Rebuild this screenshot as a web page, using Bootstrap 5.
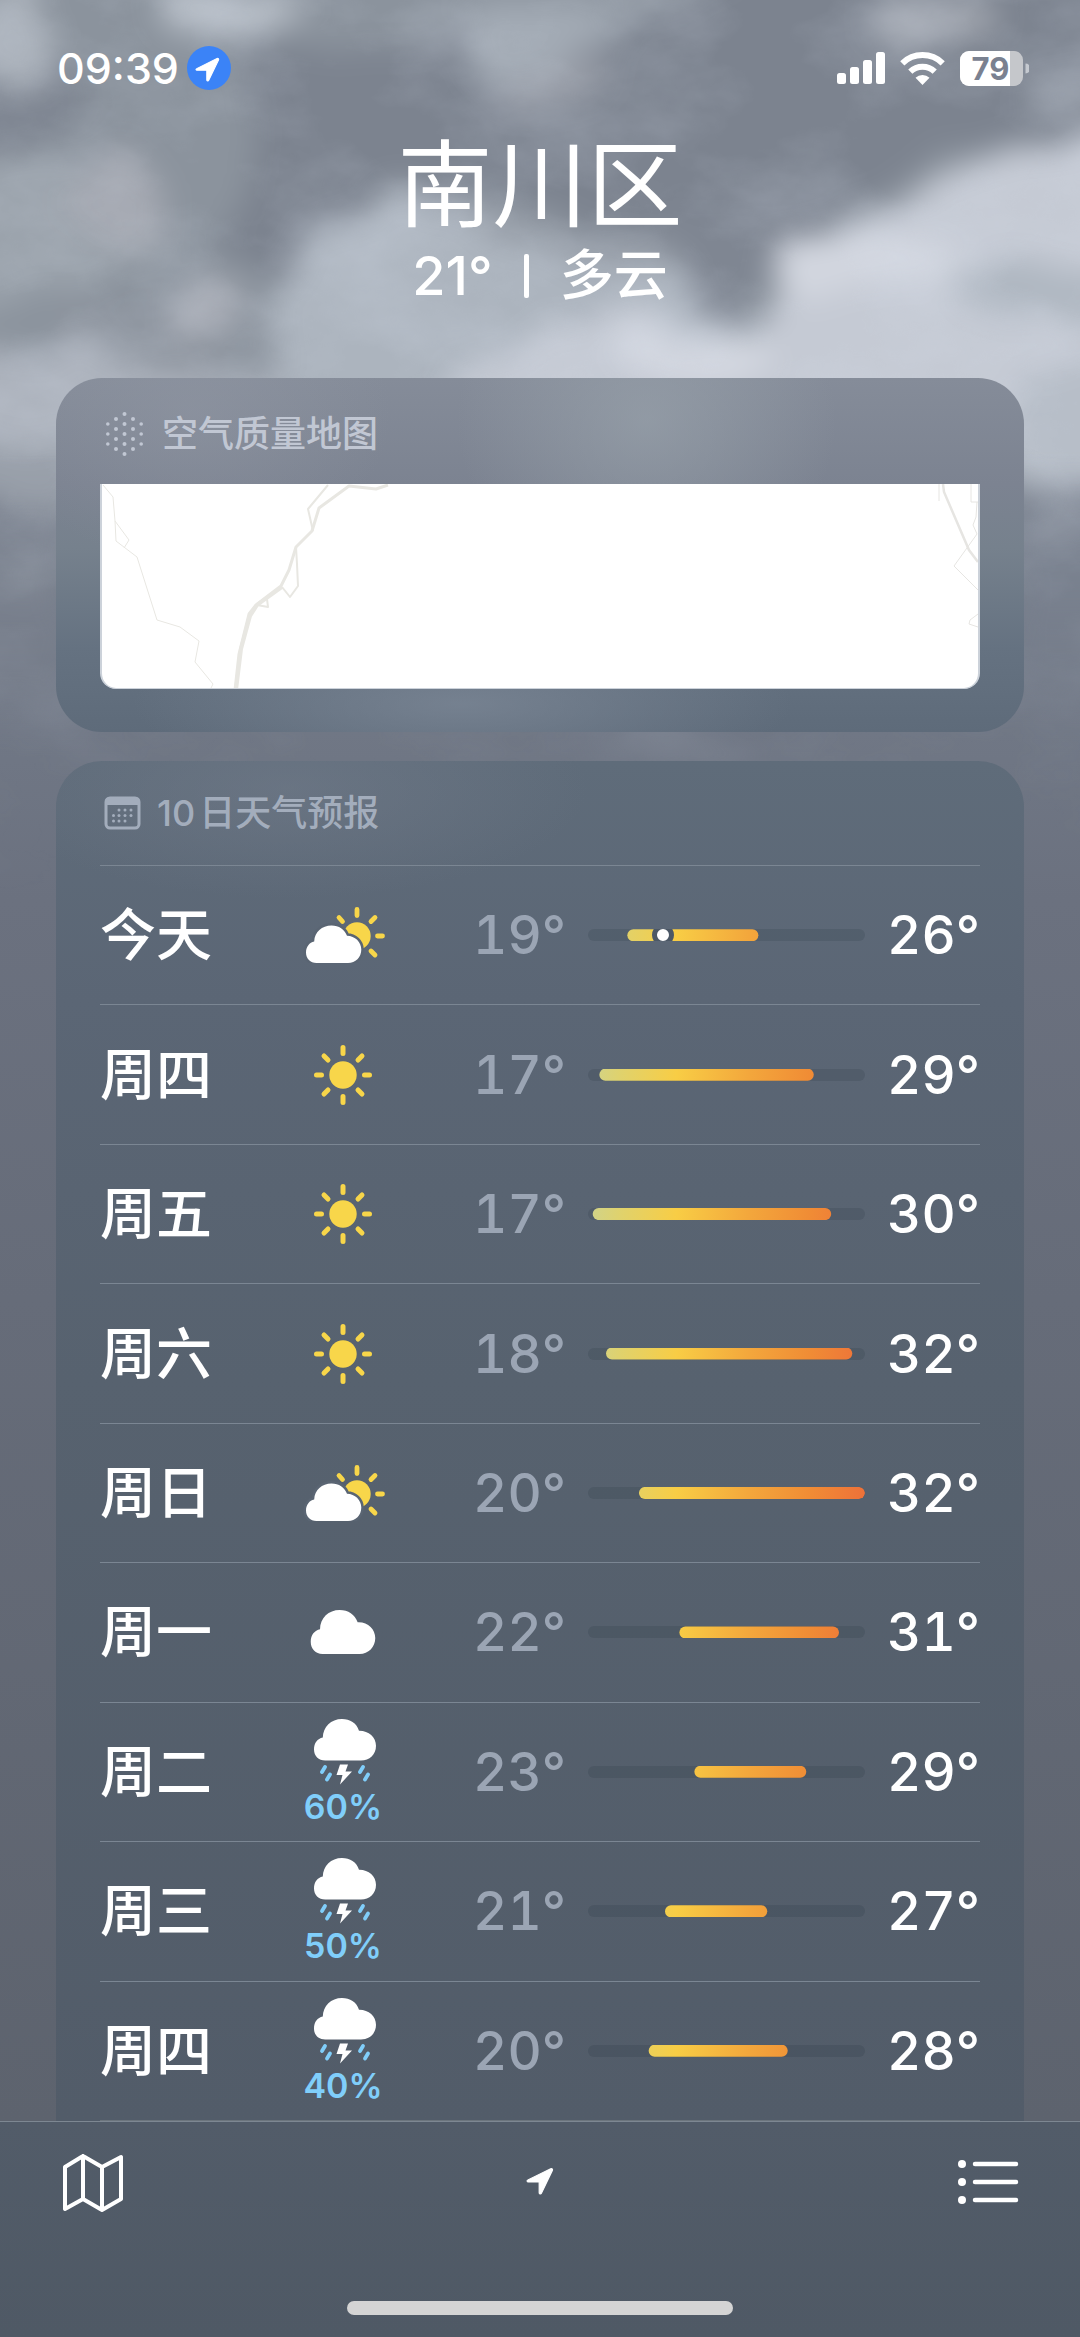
<!DOCTYPE html>
<html lang="zh-CN">
<head>
<meta charset="utf-8">
<meta name="viewport" content="width=device-width, initial-scale=1">
<title>天气 · 南川区</title>
<link href="https://cdn.jsdelivr.net/npm/bootstrap@5.3.0/dist/css/bootstrap.min.css" rel="stylesheet">
<style>
  body { font-family: Inter, "Noto Sans CJK SC", sans-serif; color: #fff; background: #646a77; }
  .weather-app { background: linear-gradient(#8b939e 0, #8b939e 380px, #747b88 620px, #6f7684 760px, #6b717f 900px, #666c79 1300px, #5d636e 2120px); }
  .sky { position: absolute; top: 0; left: 0; width: 100%; height: 900px; }
  .status-bar { padding: 44px 51px 38px 57px; }
  .clock { font-size: 43px; line-height: 48px; font-weight: 500; }
  .status-row { height: 48px; }
  .status-icons { gap: 15px; }
  .city { font-size: 95px; line-height: 112px; font-weight: 400; }
  .summary { font-size: 54px; line-height: 68px; font-weight: 500; gap: 31px; margin-bottom: 68px; }
  .summary-bar { width: 5px; height: 44px; border-radius: 2px; background: #fff; }
  .panels { padding: 0 56px; gap: 29px; }
  .panel { padding: 28px 44px 0; border-radius: 46px; }
  .panel-air { padding: 32px 44px 43px;
    background: radial-gradient(ellipse 190px 170px at 61% 12%, rgba(158,168,176,.55), transparent),
      radial-gradient(ellipse 200px 150px at 14% 10%, rgba(150,156,168,.4), transparent),
      radial-gradient(ellipse 330px 80px at 42% 92%, rgba(126,137,152,.7), transparent),
      linear-gradient(#858c99 0, #7c8391 106px, #76818d 170px, #657281 270px, #5e6b7a 354px); }
  .panel-days { border-radius: 46px 46px 0 0;
    background: radial-gradient(ellipse 300px 110px at 24% 2%, rgba(116,125,140,.5), transparent),
      linear-gradient(#5f6c7a 0, #5b6675 240px, #57626f 620px, #525c69 100%); }
  .panel-title { font-size: 36px; line-height: 48px; font-weight: 500; padding-bottom: 28px; }
  .panel-air .panel-title { color: #c1c7d3; padding-bottom: 26px; }
  .panel-days .panel-title { color: #a3adbc; }
  .air-map { height: 205px; background: #fff; border: 1px solid #ccd2da; border-width: 0 2px 1px; border-radius: 0 0 16px 16px; }
  .forecast-day { flex: 1 1 0; min-height: 130px; border-top: 1px solid #7b8693; font-size: 53px; font-weight: 500; line-height: 62px; }
  .day-name { width: 164px; font-size: 56px; }
  .day-icon { width: 158px; }
  .rain-chance { font-size: 34px; line-height: 36px; font-weight: 600; color: #80cefa; }
  .temp-low { width: 144px; color: #9ba5b4; }
  .temp-high { width: 115px; }
  .temp-low, .temp-high { font-variant-numeric: tabular-nums; }
  .range { height: 12px; margin-left: 22px; border-radius: 6px; background: rgba(20,30,45,.12); position: relative; overflow: hidden; }
  .range-fill { height: 100%; background: linear-gradient(95deg, #cfd38c 0, #e0d26c 12%, #f8cd45 32%, #f3a73c 58%, #f08c35 80%, #ee7139 100%); }
  .range-now { position: absolute; top: -5px; width: 22px; height: 22px; margin-left: -11px; border: 5px solid #4c5866; border-radius: 50%; background: #fff; }
  .toolbar { height: 216px; background: linear-gradient(#525c69, #4f5965); border-top: 1px solid #7d8792; padding: 27px 57px 0; }
  .tool-btn { width: 72px; height: 64px; padding: 0; border: 0; background: none; color: #fff; line-height: 0; }
  .home-line { width: 40%; height: 14px; border-radius: 7px; background: #d4d4d4; margin-bottom: 22px; }
</style>
<script src="https://cdn.jsdelivr.net/npm/bootstrap@5.3.0/dist/js/bootstrap.bundle.min.js"></script>
</head>
<body>
<svg width="0" height="0" class="position-absolute" aria-hidden="true">
  <defs>
    <symbol id="arrow" viewBox="0 0 24 24"><path d="M1.600 11.200 21.200 1.500c1-.5 1.900.4 1.400 1.400L13.200 22.400c-.5 1-1.900.8-1.900-.4v-9.200H2c-1.200 0-1.500-1.200-.4-1.600Z" fill="currentColor" stroke="currentColor" stroke-width="1" stroke-linejoin="round"/></symbol>
    <symbol id="sun" viewBox="0 0 60 60">
      <circle cx="30" cy="30" r="13.700" fill="#f8d64a"/>
      <g stroke="#f8d64a" stroke-width="5" stroke-linecap="round">
        <path d="M30 2.500v6M30 51.500v6M3.500 30h5M51.500 30h5M11 11l4 4M45 45l4 4M49 11l-4 4M15 45l-4 4"/>
      </g>
    </symbol>
    <symbol id="cloud" viewBox="0 0 66 45"><path d="M12 45C5 45 0 40 0 32.500 0 25.500 4 21 9.500 19.800 9.500 8 18.500 0 29.500 0 38.500 0 45 4.500 48 12.500 58.500 12 66 19.500 66 28.700 66 38 59 45 50 45Z" fill="#fff"/></symbol>
    <symbol id="partly" viewBox="-6 0 86 56">
      <circle cx="51" cy="29" r="13.700" fill="#f8d64a"/>
      <path d="M51 2.500v6M71.500 29h5M33 10.500l3.500 4M69 10.500l-4 4M65 44l4 4" stroke="#f8d64a" stroke-width="4.800" stroke-linecap="round"/>
      <path d="M10.500 56C4.300 56 0 51.500 0 45.500 0 39.500 3.500 35.500 8.200 34.500 8.500 25 16 18.500 25.500 18.500 33 18.500 38.500 22.500 41 28.800 49 29 55.300 35 55.300 42.500 55.300 50.300 49.500 56 42 56Z" fill="#fff" stroke="#5a6573" stroke-width="5" paint-order="stroke"/>
    </symbol>
    <symbol id="storm" viewBox="-4 0 66 66">
      <path d="M11.300 41.500C4.500 41.500 0 37 0 30.500 0 24 3.500 19.500 8.800 18.500 9 8 17 0 28 0 36 0 42.500 4 45 11.700 54.500 11.500 62 18 62 26.700 62 35.500 55.500 41.500 47 41.500Z" fill="#fff"/>
      <path d="M26 45.500h8l-2.500 7H38L26 65.500l2.500-9.500H22.500Z" fill="#fff"/>
      <path d="M11 48l-3 5M16 55.500l-3 5M49 48l-3 5M54 55.500l-3 5" stroke="#80cefa" stroke-width="3.800" stroke-linecap="round"/>
    </symbol>
  </defs>
</svg>

<div class="weather-app position-relative min-vh-100 d-flex flex-column">
  <svg class="sky" viewBox="0 0 1080 900" preserveAspectRatio="none" aria-hidden="true">
    <defs>
      <filter id="wisp" x="-10%" y="-10%" width="120%" height="120%" color-interpolation-filters="sRGB">
        <feTurbulence type="fractalNoise" baseFrequency="0.009 0.012" numOctaves="4" seed="7" result="n"/>
        <feDisplacementMap in="SourceGraphic" in2="n" scale="60" xChannelSelector="R" yChannelSelector="G" result="d"/>
        <feGaussianBlur in="d" stdDeviation="15"/>
      </filter>
      <filter id="grain" x="0" y="0" width="100%" height="100%" color-interpolation-filters="sRGB">
        <feTurbulence type="fractalNoise" baseFrequency="0.007 0.011" numOctaves="5" seed="21"/>
        <feColorMatrix values="0 0 0 0 .86  0 0 0 0 .89  0 0 0 0 .94  1.600 0 0 0 -.62"/>
      </filter>
      <linearGradient id="fade" x1="0" y1="0" x2="0" y2="1">
        <stop offset="0" stop-color="#fff"/><stop offset=".5" stop-color="#fff"/><stop offset=".75" stop-color="#fff" stop-opacity=".45"/><stop offset="1" stop-color="#fff" stop-opacity="0"/>
      </linearGradient>
      <mask id="fadeMask"><rect width="1080" height="900" fill="url(#fade)"/></mask>
    </defs>
    <g mask="url(#fadeMask)">
      <g filter="url(#wisp)">
        <rect x="-100" y="-100" width="1280" height="560" fill="#8b939d"/>
        <path d="M250 60 400 40 620 30 760-40H1140V110L960 150 860 200 770 270 730 310 680 290 640 230 470 190 370 200 290 290 220 250 250 170Z" fill="#7c838f"/>
        <path d="M-50 90 60 60 90 110 30 160-50 190Z" fill="#7c838f"/>
        <ellipse cx="225" cy="15" rx="75" ry="32" fill="#b6bdc6"/>
        <ellipse cx="15" cy="35" rx="38" ry="55" fill="#a9b0b9"/>
        <ellipse cx="530" cy="40" rx="75" ry="38" fill="#a3abb5"/>
        <ellipse cx="940" cy="25" rx="70" ry="28" fill="#a0a5ae"/>
        <ellipse cx="1060" cy="85" rx="40" ry="22" fill="#949ba6"/>
        <ellipse cx="545" cy="90" rx="50" ry="20" fill="#989da7"/>
        <path d="M-50 170 60 140 140 180 160 240 100 290-50 330Z" fill="#9aa2ab"/>
        <ellipse cx="110" cy="200" rx="45" ry="45" fill="#a4a8b1"/>
        <path d="M60 310 170 290 250 320 210 380 60 350Z" fill="#8b929c"/>
        <path d="M-60 350 100 340 220 370 400 390 300 480H-60Z" fill="#aab0ba"/>
        <path d="M260 310 320 225 380 200 480 215 600 235 680 270 740 325 820 330 820 420H280Z" fill="#acb4be"/>
        <path d="M390 200 470 205 550 230 660 235 690 270 600 265 500 240Z" fill="#959ca6"/>
        <path d="M440 370 560 325 690 320 760 345 800 270 860 215 930 180 1010 150 1150 110V440H440Z" fill="#c5cad4"/>
        <path d="M650 200 770 220 770 270 730 325 690 300Z" fill="#7f8692"/>
        <ellipse cx="860" cy="260" rx="90" ry="38" fill="#d2d6df"/>
        <ellipse cx="700" cy="360" rx="70" ry="25" fill="#d3d7e0"/>
        <path d="M930 270 1010 250 1100 270V330L980 310Z" fill="#afb7c1"/>
        <ellipse cx="200" cy="305" rx="35" ry="22" fill="#a7abb4"/>
        <path d="M1010 370 1130 340V480L1060 500 1010 460Z" fill="#b7bec8"/>
        <path d="M-50 430 70 440 80 520-50 500Z" fill="#9aa1ab"/>
        <path d="M-50 500 80 510 80 720-50 700Z" fill="#7b828f"/>
        <path d="M1010 500 1130 480V700H1010Z" fill="#7a8290"/>
        <ellipse cx="1060" cy="530" rx="40" ry="20" fill="#949ba7"/>
        <ellipse cx="30" cy="580" rx="30" ry="16" fill="#8b929d"/>
        <ellipse cx="680" cy="745" rx="90" ry="12" fill="#8b929e"/>
      </g>
      <rect width="1080" height="900" filter="url(#grain)" opacity=".26"/>
    </g>
  </svg>

  <header class="position-relative">
    <div class="status-bar d-flex justify-content-between">
      <div class="status-row d-flex align-items-center">
        <time class="clock">09:39</time>
        <svg class="ms-2" width="44" height="44" viewBox="0 0 44 44" role="img" aria-label="定位"><circle cx="22" cy="22" r="22" fill="#3b83f7"/><use href="#arrow" x="8" y="11" width="25" height="25" color="#fff"/></svg>
      </div>
      <div class="status-row status-icons d-flex align-items-center">
        <svg width="48" height="32" viewBox="0 0 48 32" fill="#fff" role="img" aria-label="信号"><rect y="21" width="9" height="11" rx="2.500"/><rect x="13" y="15" width="9" height="17" rx="2.500"/><rect x="26" y="8" width="9" height="24" rx="2.500"/><rect x="39" width="9" height="32" rx="2.500"/></svg>
        <svg width="45" height="34" viewBox="0 0 45 34" fill="none" stroke="#fff" stroke-width="6" role="img" aria-label="无线网络"><path d="M2.300 12.300a29 29 0 0 1 40.400 0"/><path d="M10.300 20.600a17.500 17.500 0 0 1 24.400 0"/><path d="M22.500 34l-7-7.200a10 10 0 0 1 14 0Z" fill="#fff" stroke="none"/></svg>
        <svg width="69" height="35" viewBox="0 0 69 35" role="img" aria-label="电量 79%">
          <clipPath id="cell"><rect width="63" height="35" rx="9"/></clipPath>
          <g clip-path="url(#cell)"><rect width="63" height="35" fill="#c5c7cb"/><rect width="50" height="35" fill="#fff"/></g>
          <path d="M65.500 12.500a5 5 0 0 1 0 10Z" fill="#c5c9d0"/>
          <text x="11.500" y="28.500" font-size="31" font-weight="700" fill="#7a8190">79</text>
        </svg>
      </div>
    </div>
    <h1 class="city text-center mb-0">南川区</h1>
    <div class="summary d-flex justify-content-center align-items-center">
      <span>21°</span><span class="summary-bar"></span><span>多云</span>
    </div>
  </header>

  <main class="panels position-relative flex-grow-1 d-flex flex-column">
    <section class="panel panel-air">
      <h2 class="panel-title d-flex align-items-center mb-0">
        <svg class="ms-1 me-3" width="42" height="44" viewBox="0 0 42 44" fill="#c1c7d3" aria-hidden="true">
          <g transform="translate(2)"><circle cx="18.500" cy="2" r="2"/><circle cx="10" cy="7" r="2"/><circle cx="27" cy="7" r="2"/><circle cx="1.800" cy="12" r="1.800"/><circle cx="18.500" cy="12" r="2"/><circle cx="35.200" cy="12" r="1.800"/><circle cx="10" cy="17" r="2"/><circle cx="27" cy="17" r="2"/><circle cx="1.800" cy="22" r="1.800"/><circle cx="18.500" cy="22" r="2"/><circle cx="35.200" cy="22" r="1.800"/><circle cx="10" cy="27" r="2"/><circle cx="27" cy="27" r="2"/><circle cx="1.800" cy="32" r="1.800"/><circle cx="18.500" cy="32" r="2"/><circle cx="35.200" cy="32" r="1.800"/><circle cx="10" cy="37" r="2"/><circle cx="27" cy="37" r="2"/><circle cx="18.500" cy="42" r="2"/></g>
        </svg>
        <span>空气质量地图</span>
      </h2>
      <div class="air-map overflow-hidden d-flex justify-content-between">
        <svg width="300" height="206" viewBox="0 0 300 206" fill="none" stroke="#e8e7e2" stroke-linejoin="round" aria-hidden="true">
          <path d="M1 1 11 13 13 37 14 57 35 73 55 136 78 143 97 157 93 178 111 200 108 206M13 37 27 56 22 64" stroke-width="1"/>
          <path d="M133 206 137 170 147 130 154 121 179 102 187 86 194 63 210 47 217 24 247 2 274 5 286 1" stroke-width="3"/>
          <path d="M134 206 139 165 148 132 155 121 M155 121 180 103" stroke-width="4"/>
          <path d="M226 1 206 25 211 47M194 63 195 80 196 102 188 113 180 103M155 121 166 123 165 115" stroke-width="2"/>
        </svg>
        <svg width="60" height="206" viewBox="0 0 60 206" fill="none" stroke="#e6e5e2" aria-hidden="true">
          <path d="M25 0 26 8 51 66 60 78" stroke-width="2.500"/>
          <path d="M21 0v17M53 0v18h7M59 18 58 33 55 41 59 50 36 82 60 106M60 130 52 136 51 140 60 143" stroke-width="1"/>
        </svg>
      </div>
    </section>

    <section class="panel panel-days flex-grow-1 d-flex flex-column">
      <h2 class="panel-title d-flex align-items-center mb-0">
        <svg class="ms-1 me-3" width="37" height="34" viewBox="0 0 37 34" aria-hidden="true">
          <rect x="2" y="2" width="33" height="30" rx="4" fill="none" stroke="#a3adbc" stroke-width="3"/>
          <path d="M1 9V6a5 5 0 0 1 5-5h25a5 5 0 0 1 5 5v3Z" fill="#a3adbc"/>
          <g fill="#a3adbc"><circle cx="15" cy="14" r="1.500"/><circle cx="21" cy="14" r="1.500"/><circle cx="27" cy="14" r="1.500"/><circle cx="9.500" cy="19.500" r="1.500"/><circle cx="15" cy="19.500" r="1.500"/><circle cx="21" cy="19.500" r="1.500"/><circle cx="27" cy="19.500" r="1.500"/><circle cx="9.500" cy="25" r="1.500"/><circle cx="15" cy="25" r="1.500"/><circle cx="21" cy="25" r="1.500"/></g>
        </svg>
        <span>10</span><span class="ms-1">日天气预报</span>
      </h2>
      <ul class="list-unstyled mb-0 flex-grow-1 d-flex flex-column border-bottom border-secondary">
        <li class="forecast-day d-flex align-items-center">
          <span class="day-name">今天</span>
          <span class="day-icon d-flex justify-content-center"><svg width="86" height="56" role="img" aria-label="局部多云"><use href="#partly"/></svg></span>
          <span class="temp-low text-end">19°</span>
          <span class="range flex-grow-1"><span class="range-fill d-block" style="clip-path: inset(0 38.500% 0 14.200% round 6px)"></span><span class="range-now" style="left: 27%"></span></span>
          <span class="temp-high text-end">26°</span>
        </li>
        <li class="forecast-day d-flex align-items-center">
          <span class="day-name">周四</span>
          <span class="day-icon d-flex justify-content-center"><svg width="60" height="60" role="img" aria-label="晴"><use href="#sun"/></svg></span>
          <span class="temp-low text-end">17°</span>
          <span class="range flex-grow-1"><span class="range-fill d-block" style="clip-path: inset(0 18.500% 0 4.100% round 6px)"></span></span>
          <span class="temp-high text-end">29°</span>
        </li>
        <li class="forecast-day d-flex align-items-center">
          <span class="day-name">周五</span>
          <span class="day-icon d-flex justify-content-center"><svg width="60" height="60" role="img" aria-label="晴"><use href="#sun"/></svg></span>
          <span class="temp-low text-end">17°</span>
          <span class="range flex-grow-1"><span class="range-fill d-block" style="clip-path: inset(0 12.200% 0 1.700% round 6px)"></span></span>
          <span class="temp-high text-end">30°</span>
        </li>
        <li class="forecast-day d-flex align-items-center">
          <span class="day-name">周六</span>
          <span class="day-icon d-flex justify-content-center"><svg width="60" height="60" role="img" aria-label="晴"><use href="#sun"/></svg></span>
          <span class="temp-low text-end">18°</span>
          <span class="range flex-grow-1"><span class="range-fill d-block" style="clip-path: inset(0 4.600% 0 6.500% round 6px)"></span></span>
          <span class="temp-high text-end">32°</span>
        </li>
        <li class="forecast-day d-flex align-items-center">
          <span class="day-name">周日</span>
          <span class="day-icon d-flex justify-content-center"><svg width="86" height="56" role="img" aria-label="局部多云"><use href="#partly"/></svg></span>
          <span class="temp-low text-end">20°</span>
          <span class="range flex-grow-1"><span class="range-fill d-block" style="clip-path: inset(0 0 0 18.400% round 6px)"></span></span>
          <span class="temp-high text-end">32°</span>
        </li>
        <li class="forecast-day d-flex align-items-center">
          <span class="day-name">周一</span>
          <span class="day-icon d-flex justify-content-center"><svg width="66" height="44" role="img" aria-label="多云"><use href="#cloud"/></svg></span>
          <span class="temp-low text-end">22°</span>
          <span class="range flex-grow-1"><span class="range-fill d-block" style="clip-path: inset(0 9.400% 0 33% round 6px)"></span></span>
          <span class="temp-high text-end">31°</span>
        </li>
        <li class="forecast-day d-flex align-items-center">
          <span class="day-name">周二</span>
          <span class="day-icon d-flex flex-column align-items-center gap-1"><svg width="66" height="66" role="img" aria-label="雷阵雨"><use href="#storm"/></svg><span class="rain-chance">60%</span></span>
          <span class="temp-low text-end">23°</span>
          <span class="range flex-grow-1"><span class="range-fill d-block" style="clip-path: inset(0 21.200% 0 38.400% round 6px)"></span></span>
          <span class="temp-high text-end">29°</span>
        </li>
        <li class="forecast-day d-flex align-items-center">
          <span class="day-name">周三</span>
          <span class="day-icon d-flex flex-column align-items-center gap-1"><svg width="66" height="66" role="img" aria-label="雷阵雨"><use href="#storm"/></svg><span class="rain-chance">50%</span></span>
          <span class="temp-low text-end">21°</span>
          <span class="range flex-grow-1"><span class="range-fill d-block" style="clip-path: inset(0 35.300% 0 27.800% round 6px)"></span></span>
          <span class="temp-high text-end">27°</span>
        </li>
        <li class="forecast-day d-flex align-items-center">
          <span class="day-name">周四</span>
          <span class="day-icon d-flex flex-column align-items-center gap-1"><svg width="66" height="66" role="img" aria-label="雷阵雨"><use href="#storm"/></svg><span class="rain-chance">40%</span></span>
          <span class="temp-low text-end">20°</span>
          <span class="range flex-grow-1"><span class="range-fill d-block" style="clip-path: inset(0 27.900% 0 21.900% round 6px)"></span></span>
          <span class="temp-high text-end">28°</span>
        </li>
      </ul>
    </section>
  </main>

  <footer class="toolbar position-relative d-flex flex-column justify-content-between">
    <nav class="d-flex justify-content-between align-items-center" aria-label="工具栏">
      <button type="button" class="tool-btn text-start" aria-label="地图">
        <svg width="72" height="64" viewBox="0 0 72 64" fill="none" stroke="#fff" stroke-width="4" stroke-linejoin="round" stroke-linecap="round"><path d="M8 18 26 7 45 18 64 8V50L45 61 26 50 8 60ZM26 7V50M45 18V61"/></svg>
      </button>
      <button type="button" class="tool-btn" aria-label="当前位置">
        <svg width="28" height="28"><use href="#arrow"/></svg>
      </button>
      <button type="button" class="tool-btn text-end" aria-label="城市列表">
        <svg width="72" height="64" viewBox="0 0 72 64" fill="#fff"><circle cx="11" cy="15" r="4"/><circle cx="11" cy="33" r="4"/><circle cx="11" cy="51" r="4"/><path d="M24 15H65M24 33H65M24 51H65" stroke="#fff" stroke-width="4.500" stroke-linecap="round"/></svg>
      </button>
    </nav>
    <div class="home-line align-self-center"></div>
  </footer>
</div>
</body>
</html>
